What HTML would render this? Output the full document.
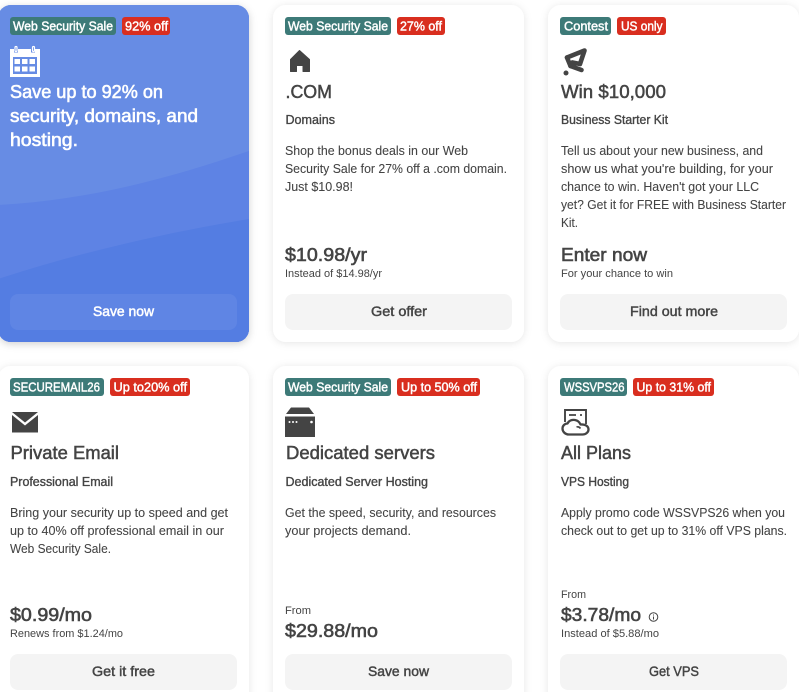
<!DOCTYPE html>
<html><head><meta charset="utf-8"><style>
html,body{margin:0;padding:0;background:#fff;width:799px;height:692px;overflow:hidden}
svg{position:absolute;left:0;top:0;display:block}
text{font-family:"Liberation Sans",sans-serif;fill:#444}
.bg{font-size:13px;fill:#fff;stroke:#fff;stroke-width:.45}
.t{font-size:18.5px;stroke:#444;stroke-width:.5}
.w{font-size:18.5px;fill:#fff;stroke:#fff;stroke-width:.6}
.s{font-size:12.5px;stroke:#444;stroke-width:.35}
.b{font-size:13px;stroke:#444;stroke-width:.08}
.p{font-size:18.5px;stroke:#444;stroke-width:.6}
.m{font-size:11px}
.n{font-size:14px;stroke:#444;stroke-width:.45}
.nw{font-size:14px;fill:#fff;stroke:#fff;stroke-width:.5}
</style></head><body>
<svg width="799" height="692" viewBox="0 0 799 692" xmlns="http://www.w3.org/2000/svg">
<defs>
<filter id="sh" x="-10%" y="-10%" width="120%" height="120%"><feDropShadow dx="0" dy="1" stdDeviation="4" flood-color="#000" flood-opacity=".1"/></filter>
<filter id="sh2" x="-10%" y="-10%" width="120%" height="120%"><feDropShadow dx="0" dy="2" stdDeviation="4" flood-color="#000" flood-opacity=".18"/></filter>
<clipPath id="c1"><rect x="-2" y="5" width="251" height="337" rx="13"/></clipPath>
</defs>
<rect x="-2" y="5" width="251" height="337" rx="13" fill="#527ce2" filter="url(#sh2)"/>
<rect x="273" y="5" width="251" height="337" rx="13" fill="#fff" filter="url(#sh)"/>
<rect x="548" y="5" width="251" height="337" rx="13" fill="#fff" filter="url(#sh)"/>
<rect x="-2" y="366" width="251" height="340" rx="13" fill="#fff" filter="url(#sh)"/>
<rect x="273" y="366" width="251" height="340" rx="13" fill="#fff" filter="url(#sh)"/>
<rect x="548" y="366" width="251" height="340" rx="13" fill="#fff" filter="url(#sh)"/>
<g clip-path="url(#c1)">
<rect x="-2" y="5" width="251" height="337" fill="#678ce4"/>
<path d="M-2 205C90 200 170 178 249 151V342H-2Z" fill="#5e83e4"/>
<path d="M-2 279C80 252 170 232 249 219V342H-2Z" fill="#547de2"/>
</g>
<rect x="10" y="294" width="227" height="36" rx="8" fill="#5f85e4"/>
<rect x="285" y="294" width="227" height="36" rx="8" fill="#f4f4f4"/>
<rect x="560" y="294" width="227" height="36" rx="8" fill="#f4f4f4"/>
<rect x="10" y="654" width="227" height="36" rx="8" fill="#f4f4f4"/>
<rect x="285" y="654" width="227" height="36" rx="8" fill="#f4f4f4"/>
<rect x="560" y="654" width="227" height="36" rx="8" fill="#f4f4f4"/>

<g fill="#3d7a78">
<rect x="10" y="17" width="106" height="18" rx="3"/><rect x="285" y="17" width="106" height="18" rx="3"/><rect x="560" y="17" width="51" height="18" rx="3"/>
<rect x="10" y="378" width="94" height="18" rx="3"/><rect x="285" y="378" width="106" height="18" rx="3"/><rect x="560" y="378" width="67" height="18" rx="3"/>
</g>
<g fill="#d92e1f">
<rect x="122" y="17" width="48" height="18" rx="3"/><rect x="397" y="17" width="48" height="18" rx="3"/><rect x="617" y="17" width="49" height="18" rx="3"/>
<rect x="110" y="378" width="80" height="18" rx="3"/><rect x="397" y="378" width="83" height="18" rx="3"/><rect x="633" y="378" width="81" height="18" rx="3"/>
</g>
<text class="bg" x="13" y="30.5" textLength="100" lengthAdjust="spacingAndGlyphs">Web Security Sale</text>
<text class="bg" x="125" y="30.5" textLength="43" lengthAdjust="spacingAndGlyphs">92% off</text>
<text class="bg" x="288" y="30.5" textLength="100" lengthAdjust="spacingAndGlyphs">Web Security Sale</text>
<text class="bg" x="400" y="30.5" textLength="42" lengthAdjust="spacingAndGlyphs">27% off</text>
<text class="bg" x="564" y="30.5" textLength="44" lengthAdjust="spacingAndGlyphs">Contest</text>
<text class="bg" x="621" y="30.5" textLength="41.5" lengthAdjust="spacingAndGlyphs">US only</text>
<text class="bg" x="13" y="391.5" textLength="87" lengthAdjust="spacingAndGlyphs">SECUREMAIL26</text>
<text class="bg" x="113.5" y="391.5" textLength="73.5" lengthAdjust="spacingAndGlyphs">Up to20% off</text>
<text class="bg" x="288" y="391.5" textLength="100" lengthAdjust="spacingAndGlyphs">Web Security Sale</text>
<text class="bg" x="401" y="391.5" textLength="76" lengthAdjust="spacingAndGlyphs">Up to 50% off</text>
<text class="bg" x="564" y="391.5" textLength="60.5" lengthAdjust="spacingAndGlyphs">WSSVPS26</text>
<text class="bg" x="636.5" y="391.5" textLength="74.5" lengthAdjust="spacingAndGlyphs">Up to 31% off</text>

<!-- calendar -->
<path fill-rule="evenodd" fill="#fff" d="M10 49H14V52.500H18V49H31V52.500H35V49H40V77H10ZM13 57V74H37V57Z"/>
<g fill="none" stroke="#fff" stroke-width="1.200"><rect x="15" y="46.500" width="2" height="5" rx="1"/><rect x="32.500" y="46.500" width="2" height="5" rx="1"/></g>
<path fill="#fff" d="M14.500 59H20V64H14.500ZM22 59H27.500V64H22ZM29.500 59H35V64H29.500ZM14.500 66.500H20V71.500H14.500ZM22 66.500H27.500V71.500H22ZM29.500 66.500H35V71.500H29.500Z"/>
<!-- house -->
<path fill="#444" stroke="#444" stroke-width="1" stroke-linejoin="round" d="M299.500 50.500L309.500 59.500V71.500H303V65.500H296.500V71.500H290.500V59.500Z"/>
<!-- plane / contest -->
<circle cx="566" cy="73" r="2.500" fill="#444"/>
<path fill="none" stroke="#444" stroke-width="4.600" stroke-linecap="round" stroke-linejoin="round" d="M567 57.500L584.500 50.500L580 64L572.500 62.500L570.500 66L581.500 70"/>
<path fill="none" stroke="#444" stroke-width="4.600" stroke-linecap="round" d="M567 57.500L570.500 66"/>
<!-- mail -->
<path fill="#444" d="M12 412H38L25 422.500ZM12 415L25 425.500L38 415V432.500H12Z"/>
<!-- server -->
<path fill="#444" d="M291 407.500H309L314 414H286Z"/>
<path fill="#444" d="M285 416.500H315V437H285Z"/>
<g fill="#fff"><circle cx="289.500" cy="422" r="1"/><circle cx="293" cy="422" r="1"/><circle cx="296.500" cy="422" r="1"/><circle cx="311.500" cy="422" r="1.300"/></g>
<!-- vps cloud -->
<path fill="none" stroke="#444" stroke-width="1.900" d="M565 422V410H586V424"/>
<path fill="none" stroke="#444" stroke-width="1.800" d="M569 415H576M580 415H582"/>
<path fill="#fff" stroke="#444" stroke-width="2.300" stroke-linejoin="round" d="M569 434.500C565 434.500 562.500 431.500 562.500 428.500C562.500 425.500 565 423.500 567.500 423.500C569 420.500 572 419.500 575 420C577.500 420.500 579.500 422 580.500 424.500C585 424 588.500 426 588.500 429.500C588.500 432.500 585.500 434.500 582.500 434.500Z"/>
<path fill="none" stroke="#444" stroke-width="1.600" d="M576.500 427C578 426.500 579.500 427 580.500 428.500"/>

<text class="w" x="10" y="98" textLength="153" lengthAdjust="spacingAndGlyphs">Save up to 92% on</text>
<text class="w" x="10" y="122" textLength="188" lengthAdjust="spacingAndGlyphs">security, domains, and</text>
<text class="w" x="10" y="146" textLength="68" lengthAdjust="spacingAndGlyphs">hosting.</text>
<text class="t" x="285.500" y="98" textLength="46.500" lengthAdjust="spacingAndGlyphs">.COM</text>
<text class="t" x="561" y="98" textLength="105" lengthAdjust="spacingAndGlyphs">Win $10,000</text>
<text class="t" x="10.500" y="459" textLength="108.500" lengthAdjust="spacingAndGlyphs">Private Email</text>
<text class="t" x="286" y="459" textLength="149" lengthAdjust="spacingAndGlyphs">Dedicated servers</text>
<text class="t" x="561" y="459" textLength="70" lengthAdjust="spacingAndGlyphs">All Plans</text>

<text class="s" x="285.500" y="124" textLength="49.500" lengthAdjust="spacingAndGlyphs">Domains</text>
<text class="s" x="561" y="124" textLength="107" lengthAdjust="spacingAndGlyphs">Business Starter Kit</text>
<text class="s" x="10" y="486" textLength="103" lengthAdjust="spacingAndGlyphs">Professional Email</text>
<text class="s" x="285.500" y="486" textLength="142.500" lengthAdjust="spacingAndGlyphs">Dedicated Server Hosting</text>
<text class="s" x="561" y="486" textLength="68" lengthAdjust="spacingAndGlyphs">VPS Hosting</text>

<text class="b" x="285" y="155" textLength="183" lengthAdjust="spacingAndGlyphs">Shop the bonus deals in our Web</text>
<text class="b" x="285" y="173" textLength="222" lengthAdjust="spacingAndGlyphs">Security Sale for 27% off a .com domain.</text>
<text class="b" x="285" y="191" textLength="68" lengthAdjust="spacingAndGlyphs">Just $10.98!</text>
<text class="b" x="561" y="155" textLength="202" lengthAdjust="spacingAndGlyphs">Tell us about your new business, and</text>
<text class="b" x="561" y="173" textLength="212" lengthAdjust="spacingAndGlyphs">show us what you're building, for your</text>
<text class="b" x="561" y="191" textLength="198" lengthAdjust="spacingAndGlyphs">chance to win. Haven't got your LLC</text>
<text class="b" x="561" y="209" textLength="225" lengthAdjust="spacingAndGlyphs">yet? Get it for FREE with Business Starter</text>
<text class="b" x="561" y="227" textLength="17" lengthAdjust="spacingAndGlyphs">Kit.</text>
<text class="b" x="10" y="517" textLength="218" lengthAdjust="spacingAndGlyphs">Bring your security up to speed and get</text>
<text class="b" x="10" y="535" textLength="214" lengthAdjust="spacingAndGlyphs">up to 40% off professional email in our</text>
<text class="b" x="10" y="553" textLength="101" lengthAdjust="spacingAndGlyphs">Web Security Sale.</text>
<text class="b" x="285" y="517" textLength="211" lengthAdjust="spacingAndGlyphs">Get the speed, security, and resources</text>
<text class="b" x="285" y="535" textLength="126" lengthAdjust="spacingAndGlyphs">your projects demand.</text>
<text class="b" x="561" y="517" textLength="224" lengthAdjust="spacingAndGlyphs">Apply promo code WSSVPS26 when you</text>
<text class="b" x="561" y="535" textLength="226" lengthAdjust="spacingAndGlyphs">check out to get up to 31% off VPS plans.</text>

<text class="p" x="285" y="261" textLength="82" lengthAdjust="spacingAndGlyphs">$10.98/yr</text>
<text class="m" x="285" y="277" textLength="97" lengthAdjust="spacingAndGlyphs">Instead of $14.98/yr</text>
<text class="p" x="561" y="261" textLength="86" lengthAdjust="spacingAndGlyphs">Enter now</text>
<text class="m" x="561" y="277" textLength="112" lengthAdjust="spacingAndGlyphs">For your chance to win</text>
<text class="p" x="10" y="621" textLength="82" lengthAdjust="spacingAndGlyphs">$0.99/mo</text>
<text class="m" x="10" y="637" textLength="113" lengthAdjust="spacingAndGlyphs">Renews from $1.24/mo</text>
<text class="m" x="285" y="614" textLength="26" lengthAdjust="spacingAndGlyphs">From</text>
<text class="p" x="285" y="637" textLength="93" lengthAdjust="spacingAndGlyphs">$29.88/mo</text>
<text class="m" x="561" y="598" textLength="25" lengthAdjust="spacingAndGlyphs">From</text>
<text class="p" x="561" y="621" textLength="80" lengthAdjust="spacingAndGlyphs">$3.78/mo</text>
<text class="m" x="561" y="637" textLength="98" lengthAdjust="spacingAndGlyphs">Instead of $5.88/mo</text>
<circle cx="653.500" cy="617" r="4.300" fill="none" stroke="#444" stroke-width="1"/>
<path d="M653.500 616.500V619.500M653.500 614.500V615.500" stroke="#444" stroke-width="1" fill="none"/>

<text class="nw" x="93" y="316" textLength="61" lengthAdjust="spacingAndGlyphs">Save now</text>
<text class="n" x="371" y="316" textLength="56" lengthAdjust="spacingAndGlyphs">Get offer</text>
<text class="n" x="630" y="316" textLength="88" lengthAdjust="spacingAndGlyphs">Find out more</text>
<text class="n" x="92" y="676" textLength="63" lengthAdjust="spacingAndGlyphs">Get it free</text>
<text class="n" x="368" y="676" textLength="61" lengthAdjust="spacingAndGlyphs">Save now</text>
<text class="n" x="649" y="676" textLength="50" lengthAdjust="spacingAndGlyphs">Get VPS</text>
</svg>
</body></html>
